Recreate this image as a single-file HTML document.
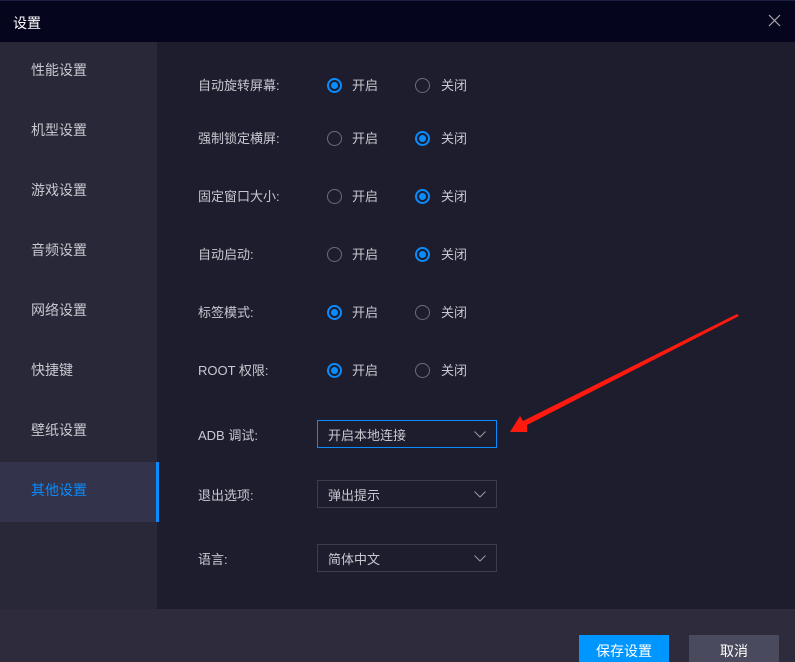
<!DOCTYPE html>
<html><head><meta charset="utf-8"><style>
*{margin:0;padding:0;box-sizing:border-box}
body{width:795px;height:662px;overflow:hidden;background:#1e1d2e;font-family:"Liberation Sans","Noto Sans CJK SC",sans-serif;font-size:13px;color:#c8c8d0;position:relative}
.title{position:absolute;left:0;top:0;width:795px;height:42px;background:#05061e;border-top:1px solid #1c2040}
.title span{position:absolute;left:13px;top:12px;color:#fff;font-size:14px}
.side{position:absolute;left:0;top:42px;width:157px;height:567px;background:#292838}
.side div{position:absolute;left:31px;font-size:14px;color:#c8c8d0}
.act{position:absolute;left:0;top:462px;width:159px;height:60px;background:#33334b;border-right:3px solid #0a8cff}
.lbl{position:absolute;left:198px;font-size:13px}
.r{position:absolute;width:15px;height:15px;border-radius:50%;border:1px solid #6c6c78}
.r.on{border:2px solid #0a8cff}
.r.on::after{content:"";position:absolute;left:2px;top:2px;width:7px;height:7px;border-radius:50%;background:#0a8cff}
.t{position:absolute;font-size:13px}
.dd{position:absolute;left:317px;width:180px;height:28px;border:1px solid #3e3d50;padding:4px 0 0 10px;font-size:13px}
.dd svg{position:absolute;right:10px;top:10px}
.foot{position:absolute;left:0;top:609px;width:795px;height:53px;background:#2e2c3c}
.btn{position:absolute;top:635px;width:90px;height:27px;color:#fff;font-size:14px;text-align:center;padding-top:6px}
</style></head><body>
<div class="title"><span>设置</span>
<svg style="position:absolute;left:768px;top:13px" width="13" height="13"><path d="M1 1L12 12M12 1L1 12" stroke="#aaa" stroke-width="1.2"/></svg></div>
<div class="side">
<div style="top:18px">性能设置</div><div style="top:78px">机型设置</div><div style="top:138px">游戏设置</div><div style="top:198px">音频设置</div><div style="top:258px">网络设置</div><div style="top:318px">快捷键</div><div style="top:378px">壁纸设置</div>
</div>
<div class="act"></div>
<div style="position:absolute;left:31px;top:480px;font-size:14px;color:#0a8cff">其他设置</div>

<div class="lbl" style="top:75px">自动旋转屏幕:</div>
<div class="r on" style="left:327px;top:78px"></div><div class="t" style="left:352px;top:75px">开启</div>
<div class="r" style="left:415px;top:78px"></div><div class="t" style="left:441px;top:75px">关闭</div>

<div class="lbl" style="top:128px">强制锁定横屏:</div>
<div class="r" style="left:327px;top:131px"></div><div class="t" style="left:352px;top:128px">开启</div>
<div class="r on" style="left:415px;top:131px"></div><div class="t" style="left:441px;top:128px">关闭</div>

<div class="lbl" style="top:186px">固定窗口大小:</div>
<div class="r" style="left:327px;top:189px"></div><div class="t" style="left:352px;top:186px">开启</div>
<div class="r on" style="left:415px;top:189px"></div><div class="t" style="left:441px;top:186px">关闭</div>

<div class="lbl" style="top:244px">自动启动:</div>
<div class="r" style="left:327px;top:247px"></div><div class="t" style="left:352px;top:244px">开启</div>
<div class="r on" style="left:415px;top:247px"></div><div class="t" style="left:441px;top:244px">关闭</div>

<div class="lbl" style="top:302px">标签模式:</div>
<div class="r on" style="left:327px;top:305px"></div><div class="t" style="left:352px;top:302px">开启</div>
<div class="r" style="left:415px;top:305px"></div><div class="t" style="left:441px;top:302px">关闭</div>

<div class="lbl" style="top:360px">ROOT 权限:</div>
<div class="r on" style="left:327px;top:363px"></div><div class="t" style="left:352px;top:360px">开启</div>
<div class="r" style="left:415px;top:363px"></div><div class="t" style="left:441px;top:360px">关闭</div>

<div class="lbl" style="top:425px">ADB 调试:</div>
<div class="dd" style="top:420px;border-color:#0a8cff">开启本地连接<svg width="12" height="7"><path d="M0.5 0.5L6 6L11.5 0.5" stroke="#999" fill="none"/></svg></div>
<div class="lbl" style="top:485px">退出选项:</div>
<div class="dd" style="top:480px">弹出提示<svg width="12" height="7"><path d="M0.5 0.5L6 6L11.5 0.5" stroke="#999" fill="none"/></svg></div>
<div class="lbl" style="top:549px">语言:</div>
<div class="dd" style="top:544px">简体中文<svg width="12" height="7"><path d="M0.5 0.5L6 6L11.5 0.5" stroke="#999" fill="none"/></svg></div>

<svg style="position:absolute;left:0;top:0" width="795" height="662"><polygon points="737,314 739,316 527,425 527,432 510,432 520,416 523,421" fill="#ff1a0f"/></svg>

<div class="foot"></div>
<div class="btn" style="left:579px;background:#0096ff">保存设置</div>
<div class="btn" style="left:689px;background:#4a4a5e">取消</div>
</body></html>
